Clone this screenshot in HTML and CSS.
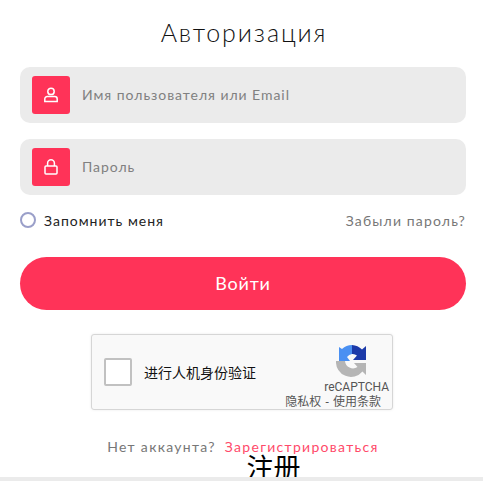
FILE: index.html
```html
<!DOCTYPE html>
<html lang="ru">
<head>
<meta charset="utf-8">
<title>Авторизация</title>
<link rel="stylesheet" href="styles.css">
</head>
<body>
<main class="panel">
  <h1 class="title">Авторизация</h1>
  <form class="form">
    <div class="field">
      <span class="field-icon">
        <svg width="14" height="16" viewBox="0 0 14 16" fill="none" stroke="#fff" stroke-width="1.5"><circle cx="7" cy="4.4" r="3.2"/><path d="M3.2 9.6h7.600a2.400 2.400 0 0 1 2.400 2.400v2.600H.8V12a2.400 2.400 0 0 1 2.400-2.400z"/></svg>
      </span>
      <span class="placeholder">Имя пользователя или Email</span>
    </div>
    <div class="field">
      <span class="field-icon">
        <svg width="14" height="16" viewBox="0 0 14 16" fill="none" stroke="#fff" stroke-width="1.5"><rect x="1" y="7" width="12" height="8" rx="1"/><path d="M3.600 7V4.200a3.400 3.400 0 0 1 6.800 0V7"/></svg>
      </span>
      <span class="placeholder">Пароль</span>
    </div>
    <div class="options">
      <label class="remember"><span class="radio"></span>Запомнить меня</label>
      <a class="forgot">Забыли пароль?</a>
    </div>
    <button class="submit" type="button">Войти</button>
    <div class="captcha">
      <span class="captcha-box"></span>
      <span class="captcha-label">进行人机身份验证</span>
      <div class="captcha-brand">
        <svg class="captcha-logo" width="32" height="32" viewBox="0 0 32 32">
          <path fill="#4a90f2" d="M16 0A15 15 0 0 0 6 4L3 2V16H14L11 12A7 7 0 0 1 16 9z"/>
          <path fill="#1c3aa9" d="M16 0A15 15 0 0 1 26 4.500L30 1V15H17L21 10.500A7 7 0 0 0 16 9z"/>
          <path fill="#b5b5b5" d="M0 16H9A8 8 0 0 0 21.500 22L18 18H30V30L26.500 26.500A15 15 0 0 1 0 16z"/>
        </svg>
        <span class="captcha-name">reCAPTCHA</span>
        <span class="captcha-terms">隐私权 - 使用条款</span>
      </div>
    </div>
    <p class="signup"><span class="signup-q">Нет аккаунта?</span><a class="signup-link">Зарегистрироваться</a></p>
    <div class="zh">注册</div>
  </form>
</main>
<div class="strip"></div>
</body>
</html>
```
FILE: styles.css
```css
* { box-sizing: border-box; }
html, body { margin: 0; height: 481px; overflow: hidden; background: #fff; }
body { font-family: "Lato", "Noto Sans CJK SC", sans-serif; color: #1a1a1a; position: relative; }
.panel { position: relative; padding: 18px 17px 0 20px; }
.title { margin: 0 0 21px; padding-left: 2px; height: 28px; line-height: 28px; font-size: 25px; font-weight: 300; text-align: center; letter-spacing: 1.9px; color: #111; }
.form { display: flex; flex-direction: column; }
.field { height: 56px; background: #ebebeb; border-radius: 10px; display: flex; align-items: center; padding-left: 12px; margin-bottom: 16px; }
.field-icon { width: 38px; height: 38px; background: #ff3358; border-radius: 3px; display: flex; align-items: center; justify-content: center; margin-right: 12px; }
.placeholder { font-size: 14px; color: #808080; letter-spacing: 0.95px; padding-bottom: 2px; }
.options { display: flex; justify-content: space-between; align-items: center; height: 20px; margin-top: -1px; font-size: 14px; }
.remember { display: flex; align-items: center; color: #222; letter-spacing: 1px; }
.radio { width: 16px; height: 16px; border: 2px solid #9a9fc9; border-radius: 50%; margin-right: 8px; }
.forgot { color: #777; letter-spacing: 1.15px; }
.submit { margin-top: 27px; height: 53px; padding-bottom: 3px; border: 0; border-radius: 27px; background: #ff3358; color: #fff; font: 400 18px "Lato", sans-serif; letter-spacing: 0.8px; }
.captcha { align-self: center; margin-top: 24px; margin-right: 2px; width: 302px; height: 76px; background: #f9f9f9; border: 1px solid #d6d6d6; border-radius: 3px; box-shadow: 0 0 3px rgba(0,0,0,.08); display: flex; align-items: center; padding-left: 12px; position: relative; }
.captcha-box { width: 28px; height: 28px; background: #fff; border: 2px solid #c1c1c1; border-radius: 2px; margin-right: 12px; }
.captcha-label { font: 14px "Roboto", "Noto Sans CJK SC", sans-serif; color: #111; }
.captcha-brand { position: absolute; top: 10px; right: 3px; display: flex; flex-direction: column; align-items: flex-end; font: 12px/14px "Roboto", "Noto Sans CJK SC", sans-serif; color: #555; }
.captcha-logo { margin-right: 21px; margin-bottom: 3px; }
.captcha-name { margin-bottom: 1px; }
.captcha-terms { margin-right: 8px; word-spacing: 1.2px; }
.signup { margin: 28px 0 0; height: 18px; line-height: 18px; font-size: 14px; letter-spacing: 1.3px; text-align: center; }
.signup-q { color: #777; margin-right: 9px; }
.signup-link { color: #ff4a6a; }
.zh { margin-top: -4px; font: 27px/30px "Noto Sans CJK SC", sans-serif; color: #000; text-align: center; padding-left: 61px; }
.strip { position: absolute; left: 0; right: 0; bottom: 0; height: 4px; background: #ebebeb; }
```
